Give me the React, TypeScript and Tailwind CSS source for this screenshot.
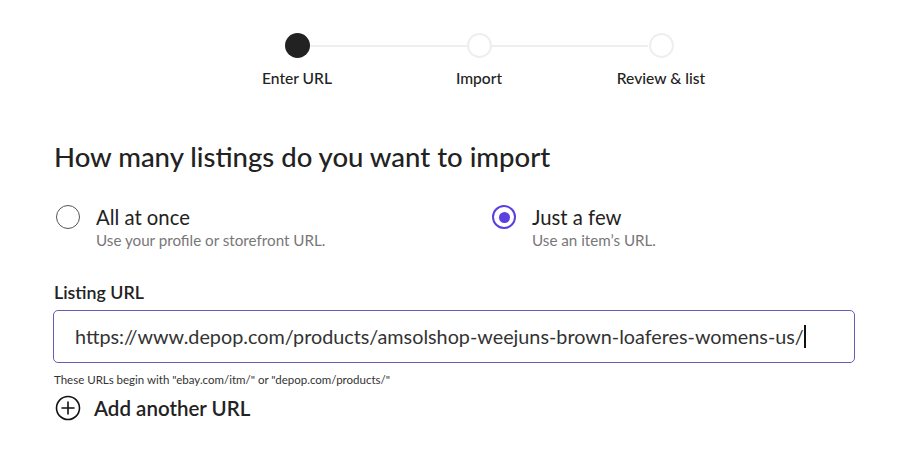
import React from "react";

export default function App() {
  const font = { fontFamily: "Lato, 'Open Sans', sans-serif" };
  return (
    <div className="w-[909px] h-[476px] bg-white text-[#222]" style={font}>
      {/* Stepper */}
      <div className="pt-[33px] pl-[206px]">
        <div className="relative w-[546px] grid grid-cols-3">
          <div className="absolute left-[104px] right-[104px] top-[12px] h-[2px] bg-[#eeeeee]" />
          {[
            { label: "Enter URL", active: true },
            { label: "Import", active: false },
            { label: "Review & list", active: false },
          ].map((s) => (
            <div key={s.label} className="relative flex flex-col items-center">
              <div
                className={
                  s.active
                    ? "w-[25px] h-[25px] rounded-full bg-[#222222]"
                    : "w-[25px] h-[25px] rounded-full bg-white border-2 border-[#eeeeee]"
                }
              />
              <div className="mt-[10px] text-[15.6px] font-medium text-[#222] leading-[20px]">
                {s.label}
              </div>
            </div>
          ))}
        </div>
      </div>

      <div className="pl-[54px] pr-[54px]">
        <h1 className="mt-[52px] text-[27.5px] font-medium leading-[34px] text-[#222]">
          How many listings do you want to import
        </h1>

        <div className="mt-[30px] flex">
          <div className="w-[438px] flex items-start">
            <div className="ml-[2px] mt-[1px] w-[24px] h-[24px] rounded-full border border-[#555] shrink-0" />
            <div className="ml-[16px]">
              <div className="text-[20.3px] leading-[26px] text-[#222]">All at once</div>
              <div className="text-[15.2px] leading-[20px] text-[#777]">
                Use your profile or storefront URL.
              </div>
            </div>
          </div>
          <div className="flex items-start">
            <div className="mt-[1px] w-[24px] h-[24px] rounded-full border-2 border-[#5b3fe0] flex items-center justify-center shrink-0">
              <div className="w-[11px] h-[11px] rounded-full bg-[#5b3fe0]" />
            </div>
            <div className="ml-[16px]">
              <div className="text-[20.3px] leading-[26px] text-[#222]">Just a few</div>
              <div className="text-[15.2px] leading-[20px] text-[#777]">Use an item’s URL.</div>
            </div>
          </div>
        </div>

        <div className="mt-[31px] text-[17.8px] font-semibold leading-[22px] text-[#222]">
          Listing URL
        </div>
        <div className="mt-[7px] w-[802px] h-[53px] ml-[-1px] border border-[#6a5ab8] rounded-[5px] flex items-center pl-[21px]">
          <span className="text-[19.8px] text-[#333]">
            https://www.depop.com/products/amsolshop-weejuns-brown-loaferes-womens-us/
          </span>
          <span className="inline-block w-[2px] h-[23px] bg-[#111]" />
        </div>
        <div className="mt-[9px] text-[11.5px] leading-[16px] text-[#333]">
          These URLs begin with "ebay.com/itm/" or "depop.com/products/"
        </div>
        <div className="mt-[7px] flex items-center h-[26px]">
          <svg width="26" height="26" viewBox="0 0 26 26" className="ml-[1px]">
            <circle cx="13" cy="13" r="11.5" fill="none" stroke="#111" strokeWidth="1.6" />
            <path d="M13 7v12M7 13h12" stroke="#111" strokeWidth="1.6" strokeLinecap="round" />
          </svg>
          <span className="ml-[13px] text-[20.5px] font-semibold text-[#222]">Add another URL</span>
        </div>
      </div>
    </div>
  );
}
